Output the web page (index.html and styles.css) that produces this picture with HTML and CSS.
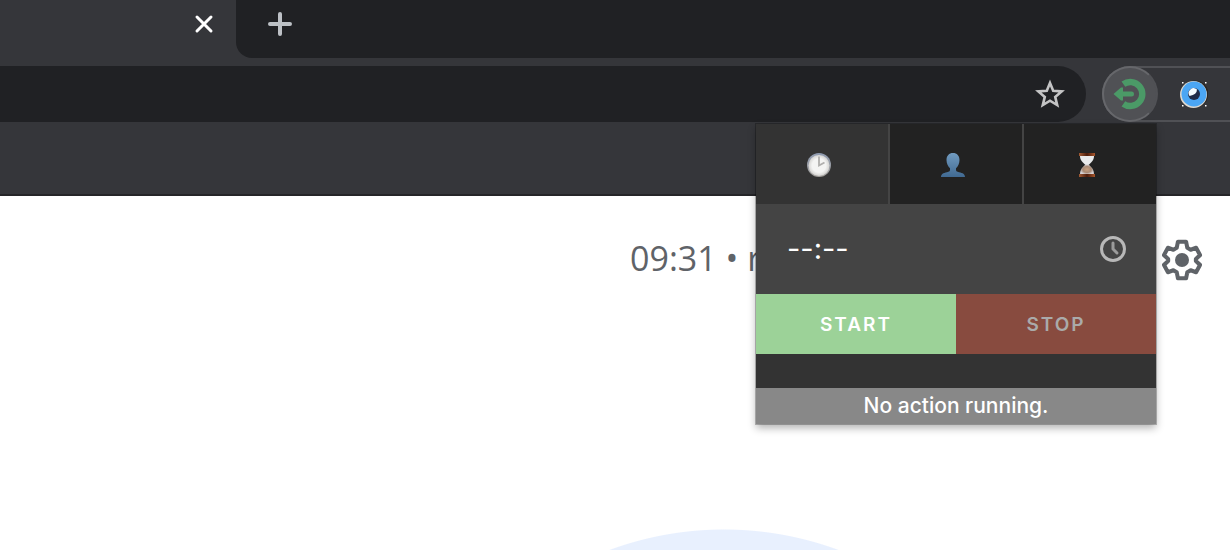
FILE: index.html
```html
<!DOCTYPE html>
<html lang="en">
<head>
<meta charset="utf-8">
<meta name="viewport" content="width=device-width, initial-scale=1">
<title>Timer extension</title>
<link rel="stylesheet" href="styles.css">
</head>
<body>
<header class="browser">
  <div class="tabs">
    <div class="tab">
      <button class="icon-button" aria-label="Close tab">
        <svg width="24" height="24" viewBox="0 0 24 24"><path d="M5 5l14 14M19 5L5 19" stroke="#fff" stroke-width="3" stroke-linecap="round"/></svg>
      </button>
    </div>
    <div class="tab-strip">
      <button class="icon-button" aria-label="New tab">
        <svg width="24" height="24" viewBox="0 0 24 24"><path d="M12 2v20M2 12h20" stroke="#bdc1c6" stroke-width="4" stroke-linecap="round"/></svg>
      </button>
    </div>
  </div>
  <div class="toolbar">
    <div class="address">
      <button class="icon-button" aria-label="Bookmark this page">
        <svg width="30" height="30" viewBox="0 0 30 30"><path d="M15 4l3.200 7.700 8.500.7-6.500 5.500 2 8.200-7.200-4.400-7.200 4.400 2-8.200-6.500-5.500 8.500-.7z" fill="none" stroke="#c4c4c5" stroke-width="2.600"/></svg>
      </button>
    </div>
    <div class="extensions">
      <button class="extension extension-active" aria-label="Timer">
        <svg width="34" height="34" viewBox="0 0 34 34"><path d="M10.400 7.200A12 12 0 1 1 10.400 26.800" fill="none" stroke="#4b9a67" stroke-width="6.400"/><path d="M.5 17l7.500-6.500h2v4h8.500a2.500 2.500 0 0 1 0 5H10v4H8z" fill="#4b9a67"/></svg>
      </button>
      <button class="extension" aria-label="Viewer">
        <svg width="30" height="30" viewBox="0 0 30 30"><circle cx="17" cy="15" r="13.500" fill="#292522"/><circle cx="15.500" cy="15.500" r="13.500" fill="#ddd8cf"/><circle cx="16" cy="15" r="12.500" fill="#4ba6f4"/><circle cx="16" cy="15" r="6" fill="#1f2b49"/><path d="M11.500 17a5 5 0 0 1 7.500-6.500q0 5-7.500 6.500z" fill="#f4fbff"/><path d="M4 3h1.500v1.500H4zM27 3h1.500v1.500H27zM4 26h1.500v1.500H4zM27 26h1.500v1.500H27z" fill="#fff"/></svg>
      </button>
    </div>
  </div>
  <div class="bookmarks"></div>
</header>
<main class="page">
  <div class="meeting-bar">
    <span class="clock">09:31 • r</span>
    <button class="icon-button" aria-label="Settings">
      <svg width="44" height="44" viewBox="0 0 44 44"><path d="M17.500 3.500h9l1.300 6.200 3.700 2.100 6-2 4.300 7.600-4.600 4.100v2l4.600 4.100-4.300 7.600-6-2-3.700 2.100-1.300 6.200h-9l-1.300-6.200-3.700-2.100-6 2-4.300-7.600 4.600-4.100v-2l-4.600-4.100 4.300-7.600 6 2 3.700-2.100z" fill="none" stroke="#5f6368" stroke-width="4.400" stroke-linejoin="round" transform="translate(2 .4) scale(.91 .96)"/><circle cx="22" cy="22" r="7" fill="#5f6368"/></svg>
    </button>
  </div>
</main>
<section class="popup" aria-label="Timer">
  <nav class="modes">
    <button class="mode mode-active" aria-label="Time">
      <svg width="24" height="24" viewBox="0 0 24 24"><defs><linearGradient id="rim" x1="0" y1="0" x2="0" y2="1"><stop stop-color="#8f9bb1"/><stop offset="1" stop-color="#a3a09b"/></linearGradient><radialGradient id="face"><stop offset=".65" stop-color="#f4f4f3"/><stop offset="1" stop-color="#d4d3d1"/></radialGradient></defs><circle cx="12" cy="12" r="12" fill="url(#rim)"/><circle cx="12" cy="12.500" r="10.500" fill="url(#face)"/><path d="M12 3.500v9l5.500-3" fill="none" stroke="#b0afad" stroke-width="1.800"/></svg>
    </button>
    <button class="mode" aria-label="Participants">
      <svg width="24" height="24" viewBox="0 0 24 24"><defs><linearGradient id="bust" x1="0" y1="0" x2="0" y2="1"><stop stop-color="#719bc0"/><stop offset="1" stop-color="#416a92"/></linearGradient></defs><path d="M12 0c4 0 6.500 2.700 6.500 7 0 3.500-1.500 6.500-3.500 8.300v1.700c0 1.300 1 1.700 3 2.200 3.800.9 6 1.800 6 4.800H0c0-3 2.200-3.900 6-4.800 2-.5 3-.9 3-2.200v-1.700C7 13.500 5.500 10.500 5.500 7 5.500 2.700 8 0 12 0z" fill="url(#bust)"/></svg>
    </button>
    <button class="mode" aria-label="Countdown">
      <svg width="24" height="24" viewBox="0 0 24 24"><defs><linearGradient id="wood"><stop stop-color="#a45d36"/><stop offset=".5" stop-color="#4c1c0b"/><stop offset="1" stop-color="#a7562c"/></linearGradient><radialGradient id="sand"><stop stop-color="#c7a080"/><stop offset=".6" stop-color="#a88974"/><stop offset="1" stop-color="#d6d2d5"/></radialGradient></defs><path d="M5 3h14c0 4-2.500 6.500-5.500 9h-3C7.500 9.500 5 7 5 3z" fill="#e9eaeb"/><path d="M10.500 11.500h3c3 2.500 5.500 5 5.500 10H5c0-5 2.500-7.500 5.500-10z" fill="url(#sand)"/><path d="M4 0h16v3H4zM4 21h16v3H4z" fill="url(#wood)"/></svg>
    </button>
  </nav>
  <div class="time-row">
    <input class="time-input" type="text" value="--:--" aria-label="End time">
    <button class="icon-button" aria-label="Pick a time">
      <svg width="26" height="26" viewBox="0 0 26 26"><circle cx="13" cy="13" r="11.500" fill="none" stroke="#b8b8b8" stroke-width="3"/><path d="M13 7v6l4 4" fill="none" stroke="#9b9b9b" stroke-width="3" stroke-linecap="round"/></svg>
    </button>
  </div>
  <div class="actions">
    <button class="action start">START</button>
    <button class="action stop">STOP</button>
  </div>
  <p class="status">No action running.</p>
</section>
</body>
</html>
```
FILE: styles.css
```css
* { box-sizing: border-box; }
body {
  margin: 0;
  min-height: 100vh;
  display: flex;
  flex-direction: column;
  position: relative;
  background: #fff;
  font-family: Inter, "Liberation Sans", sans-serif;
}
button {
  margin: 0;
  padding: 0;
  border: 0;
  background: none;
  font: inherit;
  color: inherit;
  cursor: pointer;
}
svg { display: block; }
.icon-button { flex: none; display: flex; }

.browser { background: #35363a; border-bottom: 2px solid #252528; }
.tabs { display: flex; height: 58px; }
.tab {
  flex: none;
  width: 236px;
  display: flex;
  justify-content: flex-end;
  padding: 12px 20px;
}
.tab-strip {
  flex: 1;
  padding: 12px 32px;
  background: #202124;
  border-bottom-left-radius: 16px;
}
.toolbar { display: flex; gap: 16px; padding: 8px 0; }
.address {
  flex: 1;
  height: 56px;
  display: flex;
  align-items: center;
  justify-content: flex-end;
  padding-right: 21px;
  background: #202124;
  border-radius: 0 28px 28px 0;
}
.extensions {
  flex: none;
  width: 128px;
  height: 56px;
  display: flex;
  align-items: center;
  gap: 20px;
  border: 2px solid #505155;
  border-right: 0;
  border-radius: 28px 0 0 28px;
}
.extension { display: flex; align-items: center; justify-content: center; }
.extension-active {
  width: 56px;
  height: 56px;
  margin-left: -2px;
  border: 2px solid #66676b;
  border-right-color: #505155;
  border-radius: 50%;
  background: #505155;
}
.bookmarks { height: 64px; }

.page {
  flex: 1;
  background: radial-gradient(circle at calc(50% + 109px) 664px, #e8f0fe 330px, transparent 331px);
}
.meeting-bar {
  display: flex;
  align-items: center;
  justify-content: space-between;
  padding: 40px 26px 0 630px;
  color: #5f6368;
}
.clock { font: 34px/44px "Open Sans", sans-serif; white-space: nowrap; padding-bottom: 4px; }

.popup {
  position: absolute;
  top: 124px;
  right: 74px;
  width: 400px;
  background: #333;
  box-shadow: 0 0 0 1px rgba(0, 0, 0, .25), 0 4px 8px rgba(0, 0, 0, .3);
}
.modes {
  display: grid;
  grid-template-columns: repeat(3, 1fr);
  gap: 2px;
  background: #444;
}
.mode {
  height: 80px;
  display: flex;
  align-items: center;
  justify-content: center;
  padding: 2px 6px 0 0;
  background: #222;
}
.mode-active { background: #333; }
.time-row {
  display: flex;
  align-items: center;
  justify-content: space-between;
  height: 90px;
  padding: 0 30px 0 31px;
  background: #444;
}
.time-input {
  width: 200px;
  padding: 0;
  border: 0;
  background: none;
  color: #fff;
  font: 29px/40px Inter, sans-serif;
}
.actions { display: grid; grid-template-columns: 1fr 1fr; }
.action { height: 60px; font-size: 19px; font-weight: 600; letter-spacing: 2px; }
.start { background: #9cd298; color: #fff; }
.stop { background: #884b3f; color: #aaa; }
.status {
  margin: 34px 0 0;
  background: #888;
  color: #fff;
  font-size: 21px;
  line-height: 36px;
  font-weight: 500;
  text-align: center;
}
```
